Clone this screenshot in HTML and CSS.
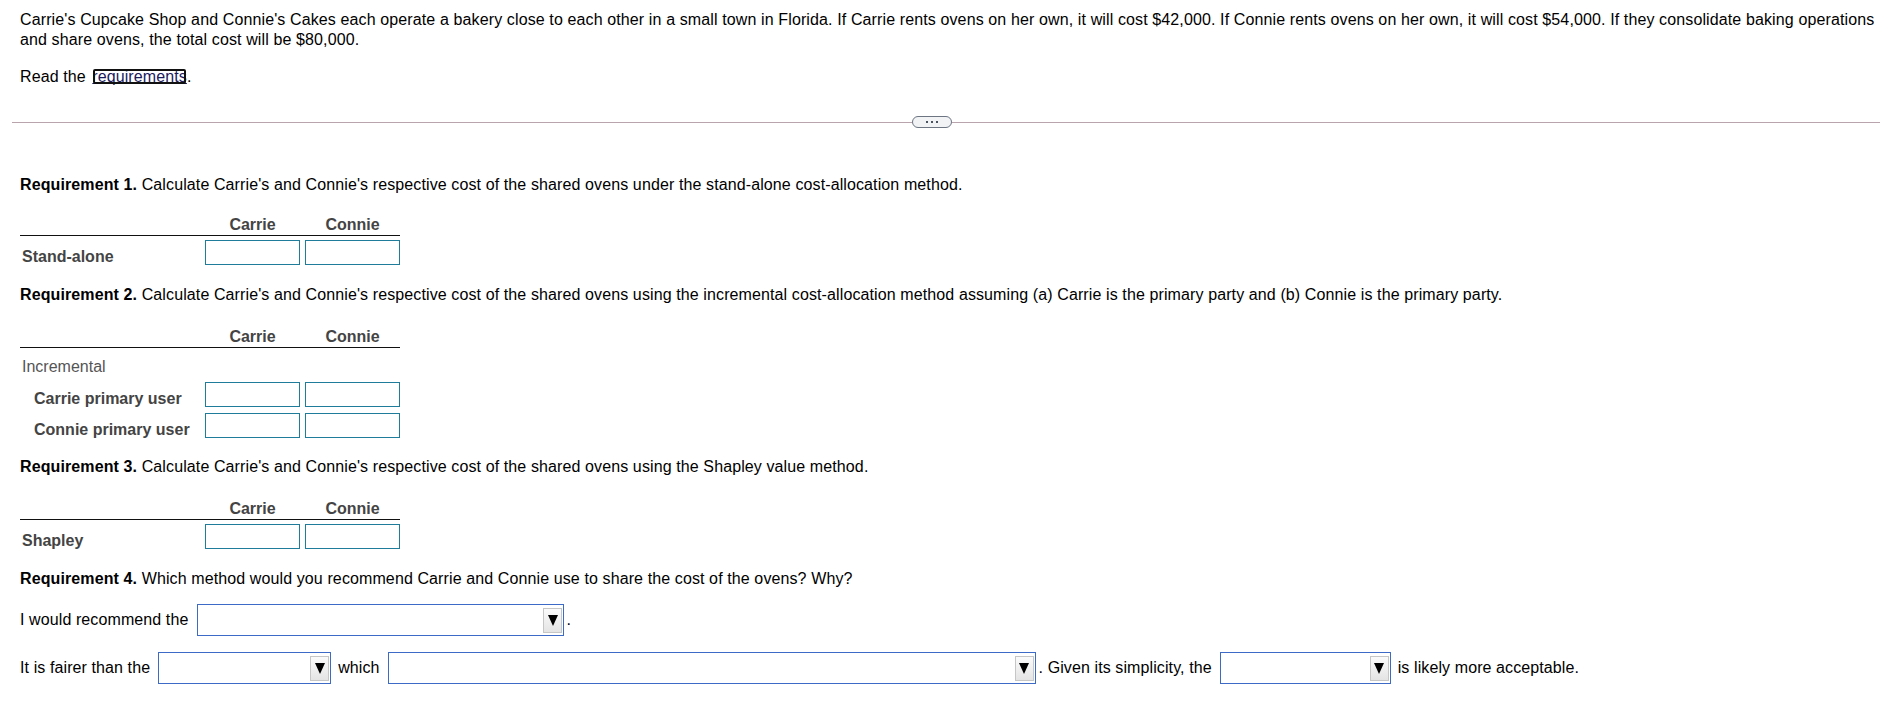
FILE: index.html
```html
<!DOCTYPE html>
<html lang="en">
<head>
<meta charset="utf-8">
<title>Cost allocation</title>
<link rel="stylesheet" href="styles.css">
</head>
<body>
<div class="page">
  <p class="intro">Carrie's Cupcake Shop and Connie's Cakes each operate a bakery close to each other in a small town in Florida. If Carrie rents ovens on her own, it will cost $42,000. If Connie rents ovens on her own, it will cost $54,000. If they consolidate baking operations and share ovens, the total cost will be $80,000.</p>
  <p class="read">Read the <a class="req-link" href="#">requirements</a>.</p>

  <div class="divider">
    <span class="rule rule-left"></span>
    <span class="more"><i></i><i></i><i></i></span>
    <span class="rule rule-right"></span>
  </div>

  <p class="req-title t1"><b>Requirement 1.</b> Calculate Carrie's and Connie's respective cost of the shared ovens under the stand-alone cost-allocation method.</p>
  <div class="table tb1">
    <div class="thead"><span></span><span class="colh">Carrie</span><span class="colh">Connie</span></div>
    <div class="trow first"><span class="lbl">Stand-alone</span><span class="inp"></span><span class="inp"></span></div>
  </div>

  <p class="req-title t2"><b>Requirement 2.</b> Calculate Carrie's and Connie's respective cost of the shared ovens using the incremental cost-allocation method assuming (a) Carrie is the primary party and (b) Connie is the primary party.</p>
  <div class="table">
    <div class="thead"><span></span><span class="colh">Carrie</span><span class="colh">Connie</span></div>
    <div class="group">Incremental</div>
    <div class="trow after-group"><span class="lbl sub">Carrie primary user</span><span class="inp"></span><span class="inp"></span></div>
    <div class="trow next"><span class="lbl sub">Connie primary user</span><span class="inp"></span><span class="inp"></span></div>
  </div>

  <p class="req-title t3"><b>Requirement 3.</b> Calculate Carrie's and Connie's respective cost of the shared ovens using the Shapley value method.</p>
  <div class="table">
    <div class="thead"><span></span><span class="colh">Carrie</span><span class="colh">Connie</span></div>
    <div class="trow first"><span class="lbl">Shapley</span><span class="inp"></span><span class="inp"></span></div>
  </div>

  <p class="req-title t4"><b>Requirement 4.</b> Which method would you recommend Carrie and Connie use to share the cost of the ovens? Why?</p>

  <div class="answer a1">
    <span>I would recommend the</span>
    <span class="dd w1"><span class="arrow"><svg width="10" height="11" viewBox="0 0 10 11"><polygon points="0,0 10,0 5,11" fill="#000"/></svg></span></span>
    <span class="tight">.</span>
  </div>
  <div class="answer a2">
    <span>It is fairer than the</span>
    <span class="dd wa"><span class="arrow"><svg width="10" height="11" viewBox="0 0 10 11"><polygon points="0,0 10,0 5,11" fill="#000"/></svg></span></span>
    <span>which</span>
    <span class="dd wb"><span class="arrow"><svg width="10" height="11" viewBox="0 0 10 11"><polygon points="0,0 10,0 5,11" fill="#000"/></svg></span></span>
    <span class="tight">. Given its simplicity, the</span>
    <span class="dd wc"><span class="arrow"><svg width="10" height="11" viewBox="0 0 10 11"><polygon points="0,0 10,0 5,11" fill="#000"/></svg></span></span>
    <span>is likely more acceptable.</span>
  </div>
</div>
</body>
</html>
```

FILE: styles.css
```css
* { box-sizing: border-box; }

html, body {
  margin: 0;
  padding: 0;
  background: #fff;
}

body {
  font-family: "Liberation Sans", Arial, sans-serif;
  font-size: 16px;
  line-height: 20px;
  color: #000;
}

.page {
  padding: 10px 2px 0 20px;
}

p { margin: 0; }

.intro {
  color: #000;
  letter-spacing: 0.12px;
}

.read {
  margin-top: 17px;
  letter-spacing: 0.1px;
}

.req-link {
  color: #1a1a5e;
  text-decoration: underline;
  outline: 2px solid #111;
  border-radius: 3px;
  outline-offset: -3px;
  margin-left: 2px;
}

/* divider with "more" pill */
.divider {
  display: flex;
  align-items: center;
  height: 12px;
  margin: 29px -2px 0 -8px;
}
.rule {
  height: 1px;
  background: #b9a3ad;
}
.rule-left { flex: 0 0 900px; }
.rule-right { flex: 1 1 auto; }
.more {
  flex: 0 0 40px;
  height: 12px;
  border: 1px solid #6d7583;
  border-radius: 6px;
  background: #f1f3f5;
  display: flex;
  align-items: center;
  justify-content: center;
  gap: 3px;
}
.more i {
  width: 2px;
  height: 2px;
  background: #4b5260;
}

/* requirement headings */
.req-title { letter-spacing: 0.11px; }
.req-title b { font-weight: bold; }
.t1 { margin-top: 47px; }
.t2 { margin-top: 20px; }
.t3 { margin-top: 19px; }
.t4 { margin-top: 20px; }

/* answer tables */
.table {
  width: 380px;
  margin-top: 22px;
}
.table.tb1 { margin-top: 20px; }
.thead, .trow {
  display: grid;
  grid-template-columns: 180px 95px 95px;
  column-gap: 5px;
}
.thead {
  border-bottom: 1px solid #111;
}
.colh {
  text-align: center;
  font-weight: bold;
  color: #444;
}
.trow { align-items: end; }
.trow.first { margin-top: 4px; }
.trow.after-group { margin-top: 5px; }
.trow.next { margin-top: 6px; }

.lbl {
  font-weight: bold;
  color: #444;
  line-height: 16px;
  padding-left: 2px;
  white-space: nowrap;
}
.lbl.sub { padding-left: 14px; }

.group {
  margin-top: 9px;
  padding-left: 2px;
  color: #555;
}

.inp {
  display: block;
  height: 25px;
  border: 1px solid #1f7c9b;
  background: #fff;
}

/* dropdown answers */
.answer {
  display: flex;
  align-items: center;
  white-space: nowrap;
  color: #000;
  letter-spacing: 0.1px;
}
.a1 { margin-top: 15px; }
.a2 { margin-top: 16px; }

.dd {
  position: relative;
  display: inline-flex;
  justify-content: flex-end;
  align-items: center;
  height: 32px;
  border: 1px solid #3c6ac6;
  background: #fff;
  margin: 0 7px 0 8px;
  padding-right: 1px;
}
.dd.w1 { width: 367px; margin-left: 9px; margin-right: 2px; }
.dd.wa { width: 173px; }
.dd.wb { width: 648px; margin-right: 3px; }
.dd.wc { width: 171px; }

.arrow {
  display: flex;
  align-items: center;
  justify-content: center;
  width: 19px;
  height: 25px;
  border: 1px solid #c6c6c6;
  background: linear-gradient(#fbfbfb, #e4e4e4);
}
```
